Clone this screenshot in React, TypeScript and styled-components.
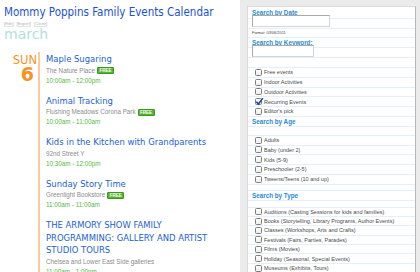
import React from "react"
import styled, { createGlobalStyle } from "styled-components"

const GlobalStyle = createGlobalStyle`
  html, body {
    margin: 0;
    padding: 0;
    background: #fff;
    overflow: hidden;
  }
  body {
    width: 420px;
    height: 272px;
  }
`

type EventItem = { title: string, venue: string, time: string, free?: boolean }

const events: EventItem[] = [
  { title: "Maple Sugaring", venue: "The Nature Place", time: "10:00am - 12:00pm", free: true },
  { title: "Animal Tracking", venue: "Flushing Meadows Corona Park", time: "10:00am - 11:00am", free: true },
  { title: "Kids in the Kitchen with Grandparents", venue: "92nd Street Y", time: "10:30am - 12:00pm" },
  { title: "Sunday Story Time", venue: "Greenlight Bookstore", time: "11:00am - 11:00am", free: true },
  { title: "THE ARMORY SHOW FAMILY PROGRAMMING: GALLERY AND ARTIST STUDIO TOURS", venue: "Chelsea and Lower East Side galleries", time: "11:00am - 1:00pm" }
]

const filters = [
  { label: "Free events" },
  { label: "Indoor Activities" },
  { label: "Outdoor Activities" },
  { label: "Recurring Events", checked: true },
  { label: "Editor's pick" }
]

const ages = ["Adults", "Baby (under 2)", "Kids (5-9)", "Preschooler (2-5)", "Tweens/Teens (10 and up)"]

const types = [
  "Auditions (Casting Sessions for kids and families)",
  "Books (Storytelling, Library Programs, Author Events)",
  "Classes (Workshops, Arts and Crafts)",
  "Festivals (Fairs, Parties, Parades)",
  "Films (Movies)",
  "Holiday (Seasonal, Special Events)",
  "Museums (Exhibits, Tours)"
]

export default function App() {
  return (
    <>
      <GlobalStyle/>
      <Page>
        <Main>
          <Title>Mommy Poppins Family Events Calendar</Title>
          <AdminLinks>
            <a>[Edit]</a>
            <a>[Export]</a>
            <a>[Clone]</a>
          </AdminLinks>
          <Month>march</Month>
          <Day>
            <DateCol>
              <Weekday>SUN</Weekday>
              <DayNumber>6</DayNumber>
            </DateCol>
            <EventList>
              {events.map(e => (
                <Event key={e.title}>
                  <EventTitle>{e.title}</EventTitle>
                  <Venue>
                    {e.venue}
                    {e.free && <FreeBadge>FREE</FreeBadge>}
                  </Venue>
                  <Time>{e.time}</Time>
                </Event>
              ))}
            </EventList>
          </Day>
        </Main>
        <Sidebar>
          <SearchBox>
            <Row $h={11}><Heading>Search by Date</Heading></Row>
            <Row $h={9}><TextInput $w={78} $top={-4}/></Row>
            <Row $h={8}><Hint>Format: 03/06/2011</Hint></Row>
            <Row $h={9}><Heading>Search by Keyword:</Heading></Row>
            <Row $h={9}><TextInput $w={62} $top={-3}/></Row>
            <Row $h={9}/>
            {filters.map(f => <CheckRow key={f.label} label={f.label} checked={f.checked}/>)}
            <Row $h={9}><Heading>Search by Age</Heading></Row>
            <Row $h={8}/>
            {ages.map(a => <CheckRow key={a} label={a}/>)}
            <Row $h={5}/>
            <Row $h={9}><Heading>Search by Type</Heading></Row>
            <Row $h={6}/>
            {types.map(t => <CheckRow key={t} label={t} tight/>)}
          </SearchBox>
        </Sidebar>
      </Page>
    </>
  )
}

const CheckRow: React.FC<{ label: string, checked?: boolean, tight?: boolean }> = ({ label, checked, tight }) =>
  <Row $h={tight ? 8.4 : 8.75}>
    <Check>
      <Box/>
      {checked &&
        <svg viewBox="0 0 10 10" width="9" height="9">
          <path d="M1.5 5.2 L3.8 7.8 L8.8 1.2" fill="none" stroke="#1d3f9e" strokeWidth="1.6"/>
        </svg>
      }
    </Check>
    <CheckLabel>{label}</CheckLabel>
  </Row>

const condensed = `"DejaVu Sans Condensed", "DejaVu Sans", sans-serif`

const Page = styled.div`
  display: flex;
  width: 420px;
  height: 272px;
  overflow: hidden;
`

const Main = styled.div`
  width: 240px;
  flex-shrink: 0;
  padding: 5px 0 0 4px;
  box-sizing: border-box;
  overflow: hidden;
`

const Title = styled.h1`
  margin: 0;
  font-family: ${condensed};
  font-stretch: condensed;
  font-weight: normal;
  font-size: 11.5px;
  line-height: 15px;
  color: #1c52d2;
  white-space: nowrap;
`

const AdminLinks = styled.div`
  display: flex;
  gap: 3px;
  font-family: "Liberation Sans", Arial, sans-serif;
  font-size: 4.2px;
  line-height: 5px;
  color: #b4b4b4;
  margin-top: 1px;

  a {
    border-bottom: 1px solid #e2e2e2;
  }
`

const Month = styled.div`
  font-family: "DejaVu Sans", sans-serif;
  font-size: 14px;
  line-height: 14px;
  color: #b3e0dc;
  margin-top: 0;
`

const Day = styled.div`
  display: flex;
  margin-top: 11px;
  margin-left: -4px;
`

const DateCol = styled.div`
  width: 38px;
  flex-shrink: 0;
  text-align: right;
  padding: 3px 1px 0 0;
  box-sizing: border-box;
  color: #f7931e;
  font-family: "DejaVu Sans", sans-serif;
`

const Weekday = styled.div`
  font-size: 11.5px;
  line-height: 10px;
`

const DayNumber = styled.div`
  font-size: 19px;
  font-weight: bold;
  line-height: 15px;
  margin-top: 2px;
  padding-right: 3px;
`

const EventList = styled.div`
  border-left: 2px solid #fcc99c;
  padding: 1px 0 40px 6px;
  flex: 1;
`

const Event = styled.div`
  margin-bottom: 9px;
`

const EventTitle = styled.div`
  width: 172px;
  font-family: ${condensed};
  font-stretch: condensed;
  font-size: 9.4px;
  line-height: 12.5px;
  color: #1c5fd0;
`

const Venue = styled.div`
  display: flex;
  align-items: center;
  gap: 2px;
  font-family: "Liberation Sans", Arial, sans-serif;
  font-size: 6.3px;
  line-height: 10px;
  color: #8c8c8c;
  white-space: nowrap;
`

const FreeBadge = styled.span`
  display: inline-block;
  background: #55b531;
  border: 1px solid #3e9420;
  border-radius: 1px;
  color: #fff;
  font-weight: bold;
  font-size: 4.5px;
  line-height: 5px;
  padding: 0 1.5px;
`

const Time = styled.div`
  font-family: "Liberation Sans", Arial, sans-serif;
  font-size: 6.3px;
  line-height: 10px;
  color: #56b947;
`

const Sidebar = styled.div`
  flex: 1;
  background: #ebebeb;
  padding: 6px 4px 0 7px;
`

const SearchBox = styled.div`
  background: #fff;
  border: 1px solid #dcdcdc;
  border-right-color: #b8b8b8;
  border-bottom: none;
  height: 100%;
  box-sizing: border-box;
`

const Row = styled.div<{ $h: number }>`
  height: ${({ $h }) => $h}px;
  border-bottom: 1px solid #e3f0fb;
  display: flex;
  align-items: center;
  padding-left: 4px;
  white-space: nowrap;
`

const Heading = styled.div`
  font-family: "Liberation Sans", Arial, sans-serif;
  font-weight: bold;
  font-size: 6.3px;
  color: #2a8ccd;
`

const TextInput = styled.div<{ $w: number, $top: number }>`
  width: ${({ $w }) => $w}px;
  height: 12px;
  box-sizing: border-box;
  border: 1px solid #a9a9a9;
  border-right-color: #d6d6d6;
  border-bottom-color: #d6d6d6;
  background: #fff;
  align-self: flex-start;
  margin-top: ${({ $top }) => $top}px;
  position: relative;
  z-index: 1;
`

const Hint = styled.div`
  font-family: "Liberation Sans", Arial, sans-serif;
  font-size: 3.9px;
  color: #444;
  align-self: flex-start;
  margin-top: 1px;
`

const Check = styled.span`
  position: relative;
  width: 7px;
  height: 7px;
  margin-left: 3px;
  margin-right: 2px;
  flex-shrink: 0;

  svg {
    position: absolute;
    left: 0;
    top: -1px;
  }
`

const Box = styled.span`
  display: block;
  width: 7px;
  height: 7px;
  box-sizing: border-box;
  border: 1px solid #7d7d7d;
  border-radius: 1.5px;
  background: linear-gradient(#fff, #ececec);
`

const CheckLabel = styled.span`
  font-family: "Liberation Sans", Arial, sans-serif;
  font-size: 5.5px;
  color: #4a4a4a;
`
